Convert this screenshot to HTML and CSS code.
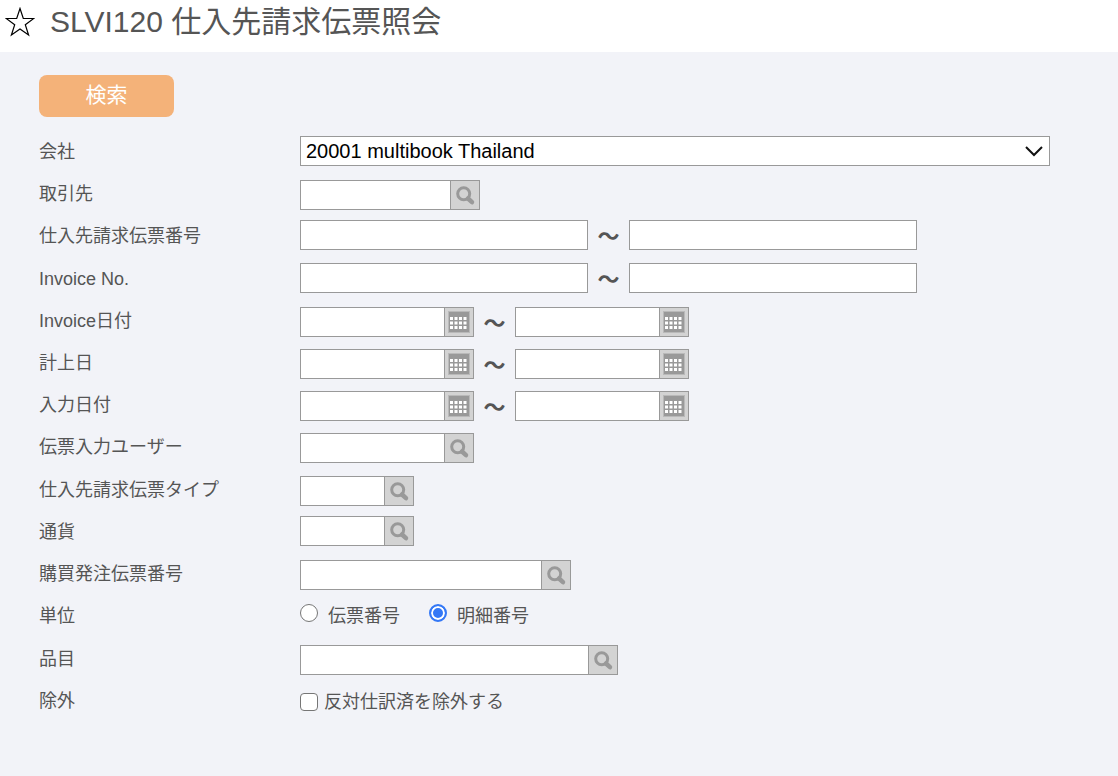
FILE: index.html
```html
<!doctype html>
<html lang="ja">
  <head>
    <meta charset="utf-8">
    <meta name="viewport" content="width=device-width, initial-scale=1">
    <title>SLVI120 仕入先請求伝票照会</title>
    <link rel="stylesheet" href="styles.css">
  </head>
  <body>
    <svg class="symbols" aria-hidden="true">
      <symbol id="icon-search" viewBox="0 0 28 28">
        <circle cx="12.700" cy="12.700" r="6" fill="none" stroke="#999" stroke-width="3"/>
        <path d="M17 17.500l4 3.700" fill="none" stroke="#999" stroke-width="4.500" stroke-linecap="round"/>
      </symbol>
      <symbol id="icon-calendar" viewBox="0 0 28 28">
        <path d="M3 3h22v22H3z" fill="#b9b9b9"/>
        <path d="M4 4h20v20H4z" fill="#999"/>
        <path d="M5 9h3v3H5zm4.500 0h3v3h-3zm4.500 0h3v3h-3zm4.500 0h3v3h-3zM5 13.500h3v3H5zm4.500 0h3v3h-3zm4.500 0h3v3h-3zm4.500 0h3v3h-3zM5 18h3v3H5zm4.500 0h3v3h-3zm4.500 0h3v3h-3zm4.500 0h3v3h-3z" fill="#fff"/>
      </symbol>
    </svg>
    <header class="header">
      <button type="button" class="favorite" aria-label="お気に入り">
        <svg width="30" height="30" viewBox="0 0 30 30"><path d="M15 1.500l3.300 10h10.500l-8.500 6.300 3.300 10.200L15 22l-8.600 6 3.300-10.200-8.500-6.300h10.500z" fill="none" stroke="#000" stroke-width="1.200"/></svg>
      </button>
      <h1>SLVI120 仕入先請求伝票照会</h1>
    </header>
    <form class="search-form">
      <button type="submit" class="search-button">検索</button>

      <div class="group">
        <div class="row">
          <label class="name" for="company">会社</label>
          <div class="field">
            <select id="company"><option>20001 multibook Thailand</option></select>
          </div>
        </div>
        <div class="row">
          <label class="name" for="partner">取引先</label>
          <div class="field addon">
            <span class="lookup partner"><input type="text" id="partner"><button type="button" aria-label="取引先を検索"><svg><use href="#icon-search"/></svg></button></span>
          </div>
        </div>
        <div class="row">
          <label class="name" for="slip-from">仕入先請求伝票番号</label>
          <div class="field">
            <input type="text" class="number" id="slip-from">
            <span class="tilde">～</span>
            <input type="text" class="number" aria-label="仕入先請求伝票番号 終了">
          </div>
        </div>
      </div>

      <div class="group">
        <div class="row">
          <label class="name" for="invoice-from">Invoice No.</label>
          <div class="field">
            <input type="text" class="number" id="invoice-from">
            <span class="tilde">～</span>
            <input type="text" class="number" aria-label="Invoice No. 終了">
          </div>
        </div>
        <div class="row">
          <label class="name" for="invoice-date">Invoice日付</label>
          <div class="field addon">
            <span class="lookup date"><input type="text" id="invoice-date"><button type="button" aria-label="カレンダー"><svg><use href="#icon-calendar"/></svg></button></span>
            <span class="tilde">～</span>
            <span class="lookup date"><input type="text" aria-label="Invoice日付 終了"><button type="button" aria-label="カレンダー"><svg><use href="#icon-calendar"/></svg></button></span>
          </div>
        </div>
        <div class="row">
          <label class="name" for="posting-date">計上日</label>
          <div class="field addon">
            <span class="lookup date"><input type="text" id="posting-date"><button type="button" aria-label="カレンダー"><svg><use href="#icon-calendar"/></svg></button></span>
            <span class="tilde">～</span>
            <span class="lookup date"><input type="text" aria-label="計上日 終了"><button type="button" aria-label="カレンダー"><svg><use href="#icon-calendar"/></svg></button></span>
          </div>
        </div>
        <div class="row">
          <label class="name" for="entry-date">入力日付</label>
          <div class="field addon">
            <span class="lookup date"><input type="text" id="entry-date"><button type="button" aria-label="カレンダー"><svg><use href="#icon-calendar"/></svg></button></span>
            <span class="tilde">～</span>
            <span class="lookup date"><input type="text" aria-label="入力日付 終了"><button type="button" aria-label="カレンダー"><svg><use href="#icon-calendar"/></svg></button></span>
          </div>
        </div>
        <div class="row">
          <label class="name" for="user">伝票入力ユーザー</label>
          <div class="field addon">
            <span class="lookup user"><input type="text" id="user"><button type="button" aria-label="ユーザーを検索"><svg><use href="#icon-search"/></svg></button></span>
          </div>
        </div>
      </div>

      <div class="group">
        <div class="row">
          <label class="name" for="slip-type">仕入先請求伝票タイプ</label>
          <div class="field addon">
            <span class="lookup code"><input type="text" id="slip-type"><button type="button" aria-label="タイプを検索"><svg><use href="#icon-search"/></svg></button></span>
          </div>
        </div>
        <div class="row">
          <label class="name" for="currency">通貨</label>
          <div class="field">
            <span class="lookup code"><input type="text" id="currency"><button type="button" aria-label="通貨を検索"><svg><use href="#icon-search"/></svg></button></span>
          </div>
        </div>
        <div class="row">
          <label class="name" for="order">購買発注伝票番号</label>
          <div class="field addon">
            <span class="lookup order"><input type="text" id="order"><button type="button" aria-label="発注伝票を検索"><svg><use href="#icon-search"/></svg></button></span>
          </div>
        </div>
        <div class="row" role="radiogroup" aria-labelledby="unit">
          <span class="name" id="unit">単位</span>
          <div class="field radios">
            <label><input type="radio" name="unit"><span>伝票番号</span></label>
            <label><input type="radio" name="unit" checked><span>明細番号</span></label>
          </div>
        </div>
      </div>

      <div class="group">
        <div class="row">
          <label class="name" for="item">品目</label>
          <div class="field addon">
            <span class="lookup item"><input type="text" id="item"><button type="button" aria-label="品目を検索"><svg><use href="#icon-search"/></svg></button></span>
          </div>
        </div>
        <div class="row">
          <span class="name">除外</span>
          <div class="field addon checks">
            <label><input type="checkbox"><span>反対仕訳済を除外する</span></label>
          </div>
        </div>
      </div>
    </form>
  </body>
</html>
```

FILE: styles.css
```css
* {
    box-sizing: border-box;
}
body {
    margin: 0;
    min-height: 100vh;
    background: #f2f3f8;
    color: #555;
    font: 18px/24px "Liberation Sans", "Noto Sans CJK JP", sans-serif;
}
button, input, select {
    margin: 0;
    font-family: inherit;
}
.symbols {
    display: none;
}
.header {
    display: flex;
    align-items: center;
    gap: 15px;
    height: 52px;
    padding: 0 5px 8px;
    background: #fff;
}
.header h1 {
    margin: 0;
    font-size: 30px;
    line-height: 44px;
    font-weight: normal;
}
.favorite {
    display: flex;
    padding: 0;
    border: 0;
    background: none;
}
.search-form {
    padding: 23px 68px 40px 39px;
}
.search-button {
    display: block;
    width: 135px;
    height: 42px;
    margin-bottom: 13px;
    padding: 0 0 2px;
    border: 0;
    border-radius: 8px;
    background: #f4b279;
    color: #fff;
    font-size: 21px;
    line-height: 40px;
}
.group {
    margin-bottom: 1px;
}
.row {
    display: flex;
    align-items: center;
    min-height: 42px;
}
.name {
    flex: 0 0 261px;
    padding-top: 2px;
}
.field {
    display: flex;
    align-items: center;
    flex: 1;
}
.addon {
    padding-top: 4px;
}
select, input[type=text] {
    height: 30px;
    border: 1px solid #999;
    border-radius: 0;
    background: #fff;
    font-size: 20px;
}
select {
    width: 100%;
    padding: 0 5px;
    color: #000;
    appearance: none;
    background: #fff url("data:image/svg+xml,%3Csvg xmlns='http://www.w3.org/2000/svg' width='18' height='11'%3E%3Cpath d='M1 1l8 8 8-8' fill='none' stroke='%23111' stroke-width='2'/%3E%3C/svg%3E") no-repeat right 6px center;
}
.number {
    width: 288px;
}
.tilde {
    width: 41px;
    padding-top: 4px;
    text-align: center;
    font-size: 22px;
    font-weight: bold;
}
.lookup {
    display: flex;
    height: 30px;
    border: 1px solid #999;
}
.lookup input[type=text] {
    flex: 1;
    min-width: 0;
    height: 28px;
    border: 0;
}
.lookup button {
    flex: 0 0 29px;
    padding: 0;
    border: 0;
    border-left: 1px solid #999;
    background: #d3d3d3;
}
.lookup svg {
    display: block;
    width: 28px;
    height: 28px;
}
.partner { width: 180px; }
.date, .user { width: 174px; }
.code { width: 114px; }
.order { width: 271px; }
.item { width: 318px; }
.radios {
    gap: 29px;
}
.radios label, .checks label {
    display: flex;
    align-items: center;
}
.radios label {
    align-items: flex-start;
    gap: 10px;
}
.radios span {
    padding-top: 2px;
}
.checks label {
    gap: 6px;
}
input[type=radio], input[type=checkbox] {
    width: 18px;
    height: 18px;
    border: 1px solid #767676;
    background: #fff;
    appearance: none;
}
input[type=radio] {
    margin-top: 2px;
    border-radius: 50%;
}
input[type=radio]:checked {
    border: 2px solid #3478f6;
    background: #3478f6;
    box-shadow: inset 0 0 0 2px #fff;
}
input[type=checkbox] {
    border-radius: 4px;
}
```
